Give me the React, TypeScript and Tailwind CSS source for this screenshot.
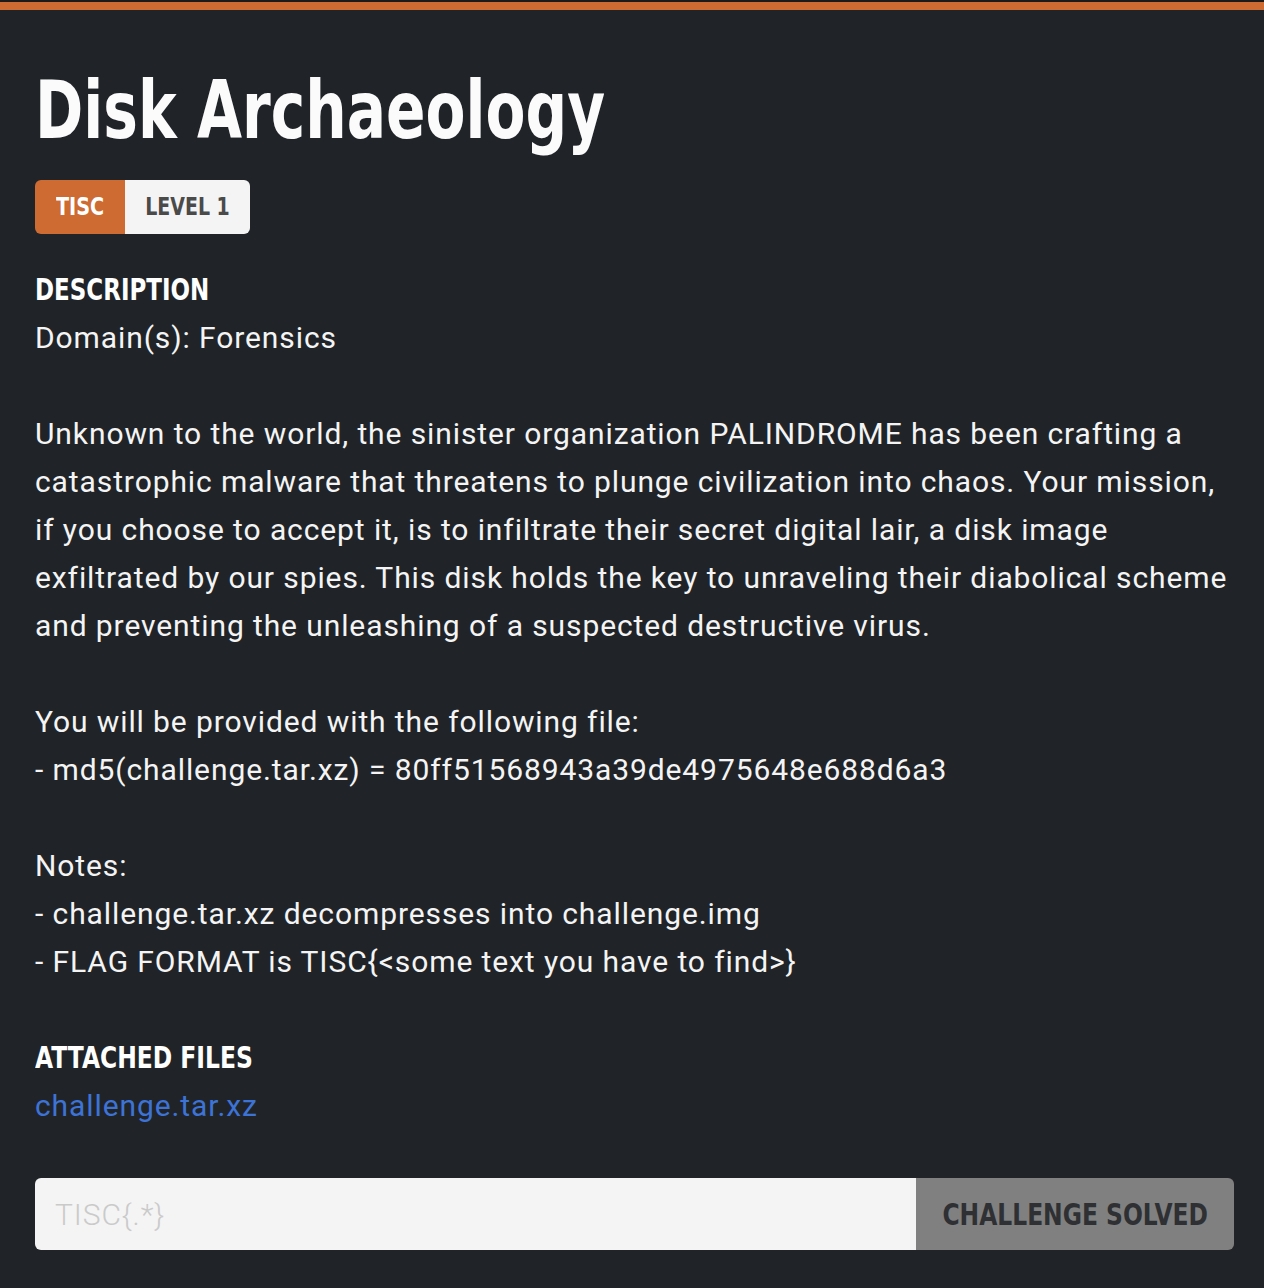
import React from "react";

const heading: React.CSSProperties = {
  fontFamily: '"DejaVu Sans", "Liberation Sans", sans-serif',
};

const Challenge: React.FC = () => {
  return (
    <div className="min-h-[1288px] w-full bg-[#202428] font-['Roboto',sans-serif] text-white">
      <div className="h-[2px] bg-[#1b1b1b]" />
      <div className="h-2 bg-[#cd6b33]" />
      <div className="pl-[35px] pr-[30px]">
        <h1
          style={heading}
          className="pt-[54px] text-[80px] font-bold leading-[94px] text-[#fbfbfb]"
        >
          <span className="inline-block origin-left scale-x-[0.728]">Disk Archaeology</span>
        </h1>
        <div
          style={heading}
          className="mt-[22px] flex h-[54px] w-fit overflow-hidden rounded-[6px] text-[24px] font-bold"
        >
          <span className="flex w-[90px] items-center justify-center bg-[#cd6b33] text-white">
            <span className="inline-block scale-x-[0.8]">TISC</span>
          </span>
          <span className="flex w-[125px] items-center justify-center bg-[#f4f4f4] text-[#4a4a4a]">
            <span className="inline-block scale-x-[0.79]">LEVEL 1</span>
          </span>
        </div>
        <div className="mt-[32px] text-[30px] leading-[48px] tracking-[0.9px] text-[#f4f4f4]">
          <h2 style={heading} className="text-[30px] font-bold tracking-normal text-white">
            <span className="inline-block origin-left scale-x-[0.766]">DESCRIPTION</span>
          </h2>
          <p>Domain(s): Forensics</p>
          <p className="mt-[48px]">
            Unknown to the world, the sinister organization PALINDROME has been crafting a
            catastrophic malware that threatens to plunge civilization into chaos. Your mission,
            if you choose to accept it, is to infiltrate their secret digital lair, a disk image
            exfiltrated by our spies. This disk holds the key to unraveling their diabolical scheme
            and preventing the unleashing of a suspected destructive virus.
          </p>
          <p className="mt-[48px]">You will be provided with the following file:</p>
          <p>- md5(challenge.tar.xz) = 80ff51568943a39de4975648e688d6a3</p>
          <p className="mt-[48px]">Notes:</p>
          <p>- challenge.tar.xz decompresses into challenge.img</p>
          <p>- FLAG FORMAT is TISC{"{"}&lt;some text you have to find&gt;{"}"}</p>
          <h2 style={heading} className="mt-[48px] text-[30px] font-bold tracking-normal text-white">
            <span className="inline-block origin-left scale-x-[0.78]">ATTACHED FILES</span>
          </h2>
          <a href="#" className="text-[#3d73d6]">challenge.tar.xz</a>
        </div>
        <div className="mt-[48px] flex h-[72px] w-full overflow-hidden rounded-[6px]">
          <input
            placeholder="TISC{.*}"
            className="min-w-0 flex-1 bg-[#f4f4f4] px-[20px] text-[30px] font-light tracking-[0.9px] text-[#333] outline-none placeholder:text-[#cacaca]"
          />
          <button
            style={heading}
            className="flex w-[318px] items-center justify-center whitespace-nowrap bg-[#808080] text-[30px] font-bold text-[#2e3033]"
          >
            <span className="inline-block scale-x-[0.78]">CHALLENGE SOLVED</span>
          </button>
        </div>
      </div>
    </div>
  );
};

export default function App() {
  return <Challenge />;
}
